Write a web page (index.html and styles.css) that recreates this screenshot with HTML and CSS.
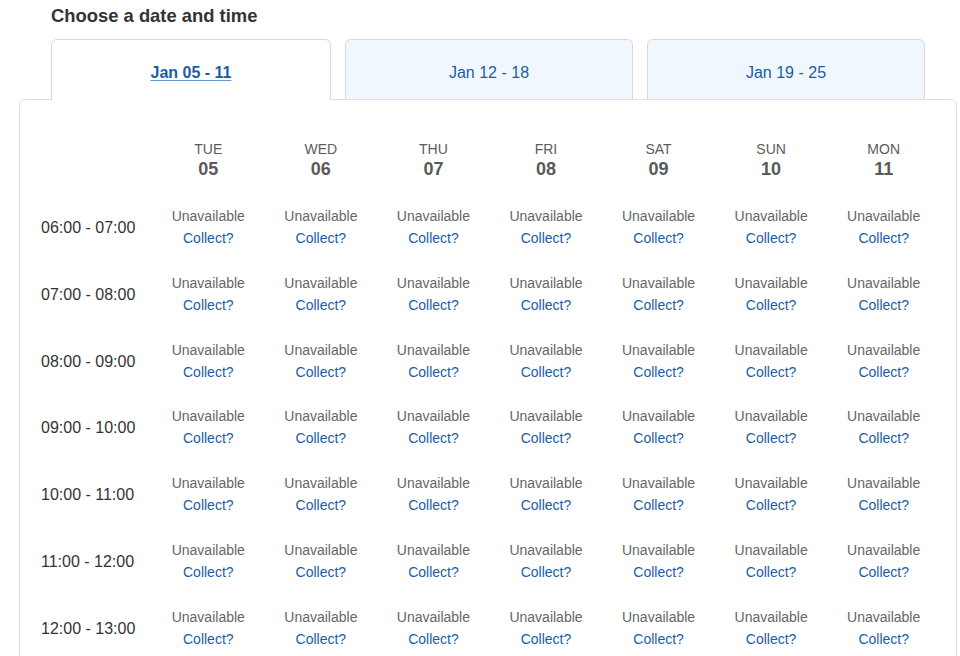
FILE: index.html
```html
<!DOCTYPE html>
<html lang="en">
<head>
    <meta charset="UTF-8">
    <meta name="viewport" content="width=device-width, initial-scale=1.0">
    <title>Choose a date and time</title>
    <link rel="stylesheet" href="styles.css">
</head>
<body>
    <div class="page">
        <h2 class="title">Choose a date and time</h2>

        <div class="tabs">
            <a class="tab tab-active" href="#">Jan 05 - 11</a>
            <a class="tab tab-wide" href="#">Jan 12 - 18</a>
            <a class="tab tab-last" href="#">Jan 19 - 25</a>
        </div>

        <div class="panel">
            <div class="slots">
                <div class="head-cell"></div>
                <div class="head-cell"><span class="day-name">TUE</span><span class="day-num">05</span></div>
                <div class="head-cell"><span class="day-name">WED</span><span class="day-num">06</span></div>
                <div class="head-cell"><span class="day-name">THU</span><span class="day-num">07</span></div>
                <div class="head-cell"><span class="day-name">FRI</span><span class="day-num">08</span></div>
                <div class="head-cell"><span class="day-name">SAT</span><span class="day-num">09</span></div>
                <div class="head-cell"><span class="day-name">SUN</span><span class="day-num">10</span></div>
                <div class="head-cell"><span class="day-name">MON</span><span class="day-num">11</span></div>

                <div class="time">06:00 - 07:00</div>
                <div class="slot"><span class="status">Unavailable</span><a class="collect" href="#">Collect?</a></div>
                <div class="slot"><span class="status">Unavailable</span><a class="collect" href="#">Collect?</a></div>
                <div class="slot"><span class="status">Unavailable</span><a class="collect" href="#">Collect?</a></div>
                <div class="slot"><span class="status">Unavailable</span><a class="collect" href="#">Collect?</a></div>
                <div class="slot"><span class="status">Unavailable</span><a class="collect" href="#">Collect?</a></div>
                <div class="slot"><span class="status">Unavailable</span><a class="collect" href="#">Collect?</a></div>
                <div class="slot"><span class="status">Unavailable</span><a class="collect" href="#">Collect?</a></div>

                <div class="time">07:00 - 08:00</div>
                <div class="slot"><span class="status">Unavailable</span><a class="collect" href="#">Collect?</a></div>
                <div class="slot"><span class="status">Unavailable</span><a class="collect" href="#">Collect?</a></div>
                <div class="slot"><span class="status">Unavailable</span><a class="collect" href="#">Collect?</a></div>
                <div class="slot"><span class="status">Unavailable</span><a class="collect" href="#">Collect?</a></div>
                <div class="slot"><span class="status">Unavailable</span><a class="collect" href="#">Collect?</a></div>
                <div class="slot"><span class="status">Unavailable</span><a class="collect" href="#">Collect?</a></div>
                <div class="slot"><span class="status">Unavailable</span><a class="collect" href="#">Collect?</a></div>

                <div class="time">08:00 - 09:00</div>
                <div class="slot"><span class="status">Unavailable</span><a class="collect" href="#">Collect?</a></div>
                <div class="slot"><span class="status">Unavailable</span><a class="collect" href="#">Collect?</a></div>
                <div class="slot"><span class="status">Unavailable</span><a class="collect" href="#">Collect?</a></div>
                <div class="slot"><span class="status">Unavailable</span><a class="collect" href="#">Collect?</a></div>
                <div class="slot"><span class="status">Unavailable</span><a class="collect" href="#">Collect?</a></div>
                <div class="slot"><span class="status">Unavailable</span><a class="collect" href="#">Collect?</a></div>
                <div class="slot"><span class="status">Unavailable</span><a class="collect" href="#">Collect?</a></div>

                <div class="time">09:00 - 10:00</div>
                <div class="slot"><span class="status">Unavailable</span><a class="collect" href="#">Collect?</a></div>
                <div class="slot"><span class="status">Unavailable</span><a class="collect" href="#">Collect?</a></div>
                <div class="slot"><span class="status">Unavailable</span><a class="collect" href="#">Collect?</a></div>
                <div class="slot"><span class="status">Unavailable</span><a class="collect" href="#">Collect?</a></div>
                <div class="slot"><span class="status">Unavailable</span><a class="collect" href="#">Collect?</a></div>
                <div class="slot"><span class="status">Unavailable</span><a class="collect" href="#">Collect?</a></div>
                <div class="slot"><span class="status">Unavailable</span><a class="collect" href="#">Collect?</a></div>

                <div class="time">10:00 - 11:00</div>
                <div class="slot"><span class="status">Unavailable</span><a class="collect" href="#">Collect?</a></div>
                <div class="slot"><span class="status">Unavailable</span><a class="collect" href="#">Collect?</a></div>
                <div class="slot"><span class="status">Unavailable</span><a class="collect" href="#">Collect?</a></div>
                <div class="slot"><span class="status">Unavailable</span><a class="collect" href="#">Collect?</a></div>
                <div class="slot"><span class="status">Unavailable</span><a class="collect" href="#">Collect?</a></div>
                <div class="slot"><span class="status">Unavailable</span><a class="collect" href="#">Collect?</a></div>
                <div class="slot"><span class="status">Unavailable</span><a class="collect" href="#">Collect?</a></div>

                <div class="time">11:00 - 12:00</div>
                <div class="slot"><span class="status">Unavailable</span><a class="collect" href="#">Collect?</a></div>
                <div class="slot"><span class="status">Unavailable</span><a class="collect" href="#">Collect?</a></div>
                <div class="slot"><span class="status">Unavailable</span><a class="collect" href="#">Collect?</a></div>
                <div class="slot"><span class="status">Unavailable</span><a class="collect" href="#">Collect?</a></div>
                <div class="slot"><span class="status">Unavailable</span><a class="collect" href="#">Collect?</a></div>
                <div class="slot"><span class="status">Unavailable</span><a class="collect" href="#">Collect?</a></div>
                <div class="slot"><span class="status">Unavailable</span><a class="collect" href="#">Collect?</a></div>

                <div class="time">12:00 - 13:00</div>
                <div class="slot"><span class="status">Unavailable</span><a class="collect" href="#">Collect?</a></div>
                <div class="slot"><span class="status">Unavailable</span><a class="collect" href="#">Collect?</a></div>
                <div class="slot"><span class="status">Unavailable</span><a class="collect" href="#">Collect?</a></div>
                <div class="slot"><span class="status">Unavailable</span><a class="collect" href="#">Collect?</a></div>
                <div class="slot"><span class="status">Unavailable</span><a class="collect" href="#">Collect?</a></div>
                <div class="slot"><span class="status">Unavailable</span><a class="collect" href="#">Collect?</a></div>
                <div class="slot"><span class="status">Unavailable</span><a class="collect" href="#">Collect?</a></div>
            </div>
        </div>
    </div>
</body>
</html>
```

FILE: styles.css
```css
body {
    margin: 0;
    padding: 0;
    background: #fff;
    font-family: "Liberation Sans", Arial, sans-serif;
    color: #333;
}

.page {
    width: 938px;
    margin-left: 19px;
}

.title {
    margin: 4px 0 11px 32px;
    font-size: 18.4px;
    line-height: 24px;
    font-weight: bold;
    color: #333;
}

/* week tabs, the active one covers the panel border */
.tabs {
    display: flex;
    align-items: flex-end;
    gap: 14px;
    margin: 0 32px;
}

.tab {
    box-sizing: border-box;
    width: 278px;
    height: 60px;
    padding-top: 23px;
    line-height: 20px;
    font-size: 16px;
    text-align: center;
    text-decoration: none;
    color: #1a5da6;
    background: #f0f7fe;
    border: 1px solid #d9d9d9;
    border-bottom: none;
    border-radius: 6px 6px 0 0;
}

.tab-active {
    position: relative;
    z-index: 1;
    width: 280px;
    height: 61px;
    margin-bottom: -1px;
    background: #fff;
    font-weight: bold;
    text-decoration: underline;
    text-decoration-color: #6b98c9;
    text-underline-offset: 2px;
}

.tab-wide {
    width: 288px;
}

.panel {
    border: 1px solid #dedede;
    border-radius: 6px;
    background: #fff;
    padding: 0 16px 20px 16px;
}

.slots {
    display: grid;
    grid-template-columns: 116px repeat(7, 1fr);
}

.head-cell {
    display: flex;
    flex-direction: column;
    align-items: center;
    padding: 39px 0 14.6px;
    line-height: 20px;
}

.day-name {
    font-size: 14px;
    color: #5c5c5c;
}

.day-num {
    font-size: 18px;
    font-weight: bold;
    color: #5a5a5a;
}

.time {
    display: flex;
    align-items: center;
    box-sizing: border-box;
    height: 66.8px;
    padding: 2px 0 0 5px;
    font-size: 16px;
    color: #333;
}

.slot {
    display: flex;
    flex-direction: column;
    align-items: center;
    justify-content: center;
    height: 66.8px;
    font-size: 14px;
    line-height: 22px;
}

.status {
    color: #666;
}

.collect {
    color: #1a5da6;
    text-decoration: none;
}
```
